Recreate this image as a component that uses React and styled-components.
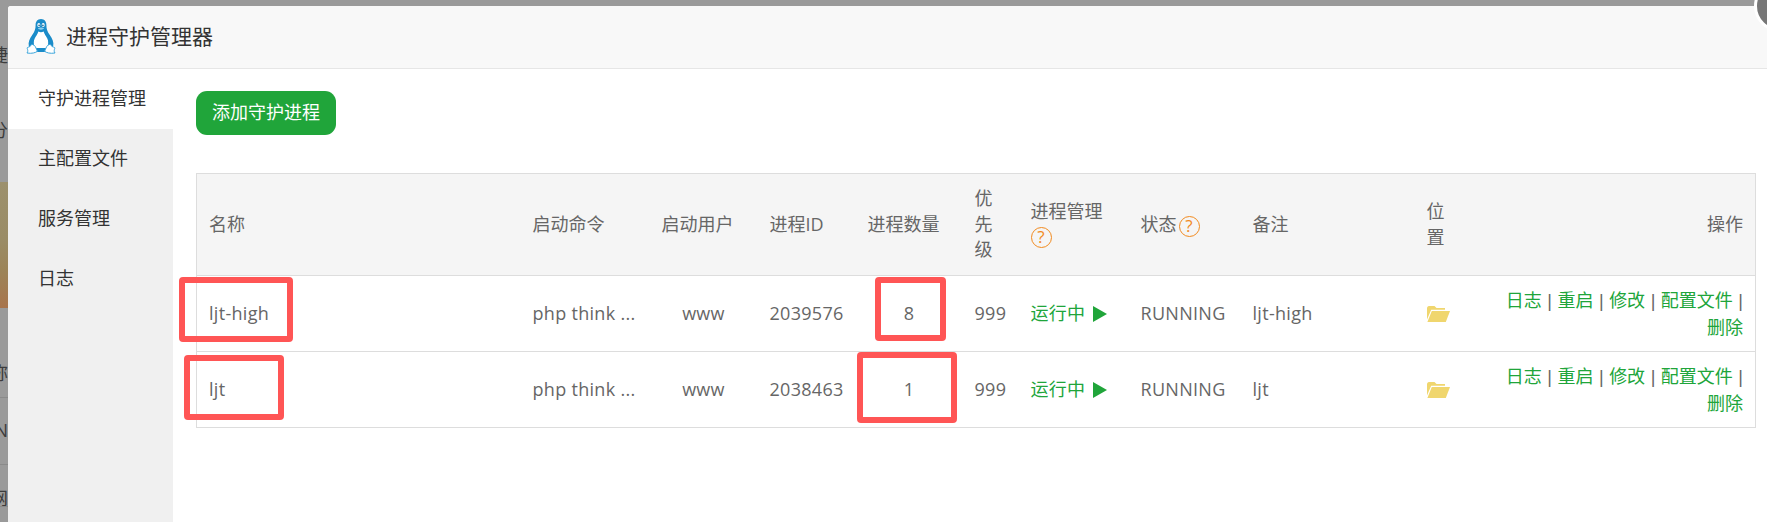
import React from 'react';
import styled, { createGlobalStyle } from 'styled-components';

const GlobalStyle = createGlobalStyle`
  html, body {
    margin: 0;
    height: 100%;
    overflow: hidden;
    background: #9a9a9a;
  }
  #root {
    height: 100%;
  }
`;

const FONT = `"Open Sans", "Noto Sans CJK SC", sans-serif`;

const Page = styled.div`
  position: relative;
  display: flex;
  width: 1767px;
  height: 522px;
  overflow: hidden;
  background: #9a9a9a;
  font-family: ${FONT};
  font-size: 18px;
  line-height: 1.42857;
  color: #666;
`;

// what is left of the page behind the dialog
const Backdrop = styled.div`
  flex: 0 0 8px;
  display: flex;
  flex-direction: column;
  overflow: hidden;
`;
const BackdropSlice = styled.div`
  flex: 0 0 ${(p) => p.$h}px;
  box-sizing: border-box;
  min-height: 0;
  display: flex;
  justify-content: flex-end;
  align-items: center;
  overflow: hidden;
  line-height: 20px;
  white-space: nowrap;
  color: #3c3c3c;
  border-bottom: ${(p) => (p.$line ? '1px solid #8a8a8a' : '0')};
`;
const BackdropImage = styled.div`
  flex: 0 0 126px;
  background: linear-gradient(180deg, #9c906c 0%, #9a8c66 45%, #9c8458 70%, #a8744c 100%);
`;

const Dialog = styled.div`
  flex: 1;
  margin-top: 6px;
  display: flex;
  flex-direction: column;
  background: #fff;
  border-top-left-radius: 3px;
  overflow: hidden;
`;
const DialogHeader = styled.header`
  flex: 0 0 63px;
  box-sizing: border-box;
  display: flex;
  align-items: center;
  gap: 10px;
  padding-left: 18px;
  background: #f8f8f8;
  border-bottom: 1px solid #e6e6e6;
  font-size: 21px;
  color: #333;
`;
const DialogBody = styled.div`
  flex: 1;
  display: flex;
  min-height: 0;
`;
const CloseButton = styled.div`
  position: absolute;
  top: -20px;
  right: -39px;
  box-sizing: border-box;
  width: 52px;
  height: 52px;
  border-radius: 50%;
  background: #777;
  border: 3px solid #fff;
`;

const Sidebar = styled.nav`
  flex: 0 0 165px;
  background: #f0f0f0;
`;
const SideItem = styled.div`
  height: 60px;
  display: flex;
  align-items: center;
  padding-left: 30px;
  color: #333;
  background: ${(p) => (p.$active ? '#fff' : 'transparent')};
`;

const Content = styled.main`
  flex: 1;
  min-width: 0;
  padding: 22px 12px 0 23px;
`;
const AddButton = styled.button`
  display: block;
  width: 140px;
  height: 44px;
  padding: 0;
  border: 0;
  border-radius: 11px;
  background: #20a53a;
  color: #fff;
  font: inherit;
`;

const Table = styled.table`
  width: 1559px;
  margin-top: 38px;
  table-layout: fixed;
  border-collapse: collapse;
  border: 1px solid #ddd;
`;
const Th = styled.th`
  padding: 12px;
  box-sizing: border-box;
  font-weight: 400;
  text-align: ${(p) => p.$align || 'left'};
  vertical-align: middle;
  background: #f5f5f5;
  border-bottom: 1px solid #ddd;
`;
const Td = styled.td`
  height: 76px;
  padding: 0 12px;
  box-sizing: border-box;
  text-align: ${(p) => p.$align || 'left'};
  vertical-align: middle;
  letter-spacing: 0.3px;
  border-top: 1px solid #ddd;
  white-space: ${(p) => (p.$nowrap ? 'nowrap' : 'normal')};
`;

const HelpMark = styled.span`
  display: inline-block;
  box-sizing: border-box;
  width: 21px;
  height: 21px;
  margin-left: ${(p) => p.$gap || 0}px;
  border: 1.5px solid #f28a1e;
  border-radius: 50%;
  color: #f28a1e;
  font-size: 17px;
  line-height: 18px;
  text-align: center;
  vertical-align: ${(p) => p.$lift || 0}px;
`;
const Running = styled.span`
  display: inline-flex;
  align-items: center;
  gap: 8px;
  color: #20a53a;
`;
const OpsList = styled.div`
  line-height: 26.5px;
  letter-spacing: 0;
`;
const Ops = styled.a`
  color: #20a53a;
  white-space: nowrap;
`;
const Sep = styled.span`
  margin: 0 ${(p) => (p.$end ? '0 0 5.5px' : '5.5px')};
  font-family: "Liberation Sans", sans-serif;
`;
const Folder = styled.svg`
  display: block;
  width: 23px;
  height: 17px;
  fill: #f0d66e;
`;

const Annotation = styled.div`
  position: absolute;
  left: ${(p) => p.$x}px;
  top: ${(p) => p.$y}px;
  width: ${(p) => p.$w}px;
  height: ${(p) => p.$h}px;
  box-sizing: border-box;
  border: 6px solid #ff5555;
  border-radius: 4px;
`;

const TuxIcon = () => (
  <svg width="30" height="36" viewBox="0 0 30 36">
    <path
      fill="#1b8cc9"
      d="M15 0C11.4 0 9.6 2.8 9.6 6c0 4-.8 6.2-3.4 10C3.6 19.8 2 23 2.8 27l4 6h16.4l4-6c.8-4-.8-7.200-3.400-11-2.600-3.800-3.400-6-3.400-10 0-3.200-1.800-6-5.400-6z"
    />
    <path fill="#fff" d="M12.400 12.500c1.600 1.100 3.600 1.100 5.200 0 1 3 2.400 4.700 3.700 7 1.300 2.400 1.300 6.500-.6 9.500H9.300c-1.900-3-1.900-7.100-.6-9.500 1.300-2.300 2.700-4 3.700-7z" />
    <ellipse cx="12.800" cy="6" rx="1.500" ry="2.100" fill="#fff" />
    <ellipse cx="17.200" cy="6" rx="1.500" ry="2.100" fill="#fff" />
    <circle cx="13.100" cy="6.400" r=".8" fill="#0f5f8c" />
    <circle cx="16.900" cy="6.400" r=".8" fill="#0f5f8c" />
    <path fill="#8fd0ee" d="M11.800 9.300c1.800-1 4.600-1 6.400 0-.8 1.800-5.600 1.800-6.400 0z" />
    <path fill="#fff" stroke="#3ba5db" strokeWidth="1" d="M5.500 25.500c1.800-.6 3.800 1.500 4.500 3.500.5 1.400 1 2.400 1.400 3.300-2 1.500-5.400 2.500-10.400 1.700 1.400-1.800.6-3.500.2-4.700-.2-1.200 1.500-1.200 2.500-1.600.9-.4 1.200-1.800 1.800-2.200z" />
    <path fill="#fff" stroke="#3ba5db" strokeWidth="1" d="M24.500 25.500c-1.800-.6-3.800 1.500-4.500 3.500-.5 1.400-1 2.400-1.400 3.300 2 1.500 5.400 2.500 10.400 1.700-1.400-1.800-.6-3.500-.2-4.700.2-1.200-1.500-1.200-2.500-1.600-.9-.4-1.200-1.800-1.800-2.200z" />
  </svg>
);

const PlayIcon = () => (
  <svg width="14" height="16" viewBox="0 0 14 16">
    <path fill="#20a53a" d="M0 0l14 8-14 8z" />
  </svg>
);

const FolderOpen = () => (
  <Folder viewBox="0 0 23 17">
    <path d="M0 14.500V3.500C0 2.200.8 1 2 1h5.500L9.500 3H18v1.800H4.200L0 14.500z" />
    <path d="M4.800 6H23l-4.200 11H.4z" />
  </Folder>
);

const columns = [324, 129, 108, 98, 107, 56, 110, 112, 174, 54, 287];

const rows = [
  { name: 'ljt-high', pid: '2039576', count: 8 },
  { name: 'ljt', pid: '2038463', count: 1 },
];

const marks = [
  { x: 179, y: 277, w: 114, h: 65 },
  { x: 184, y: 355, w: 100, h: 65 },
  { x: 875, y: 277, w: 71, h: 64 },
  { x: 857, y: 352, w: 100, h: 71 },
];

const App = () => (
  <Page>
    <GlobalStyle />
    <Backdrop>
      <BackdropSlice $h={45} />
      <BackdropSlice $h={20}>捷</BackdropSlice>
      <BackdropSlice $h={55} />
      <BackdropSlice $h={20}>分</BackdropSlice>
      <BackdropSlice $h={42} />
      <BackdropImage />
      <BackdropSlice $h={55} />
      <BackdropSlice $h={20}>称</BackdropSlice>
      <BackdropSlice $h={15} $line />
      <BackdropSlice $h={24} />
      <BackdropSlice $h={16}>N</BackdropSlice>
      <BackdropSlice $h={27} $line />
      <BackdropSlice $h={24} />
      <BackdropSlice $h={18} $line>网</BackdropSlice>
    </Backdrop>

    <Dialog>
      <DialogHeader>
        <TuxIcon />
        进程守护管理器
      </DialogHeader>
      <DialogBody>
        <Sidebar>
          <SideItem $active>守护进程管理</SideItem>
          <SideItem>主配置文件</SideItem>
          <SideItem>服务管理</SideItem>
          <SideItem>日志</SideItem>
        </Sidebar>
        <Content>
          <AddButton>添加守护进程</AddButton>
          <Table>
            <colgroup>
              {columns.map((w, i) => (
                <col key={i} width={w} />
              ))}
            </colgroup>
            <thead>
              <tr>
                <Th>名称</Th>
                <Th>启动命令</Th>
                <Th>启动用户</Th>
                <Th>进程ID</Th>
                <Th>进程数量</Th>
                <Th>优先级</Th>
                <Th>
                  进程管理
                  <HelpMark $lift={1}>?</HelpMark>
                </Th>
                <Th>
                  状态
                  <HelpMark $gap={2} $lift={-1}>?</HelpMark>
                </Th>
                <Th>备注</Th>
                <Th>位置</Th>
                <Th $align="right">操作</Th>
              </tr>
            </thead>
            <tbody>
              {rows.map((r) => (
                <tr key={r.pid}>
                  <Td>{r.name}</Td>
                  <Td $nowrap>php think ...</Td>
                  <Td $align="center">www</Td>
                  <Td>{r.pid}</Td>
                  <Td $align="center">{r.count}</Td>
                  <Td>999</Td>
                  <Td $nowrap>
                    <Running>
                      运行中
                      <PlayIcon />
                    </Running>
                  </Td>
                  <Td>RUNNING</Td>
                  <Td>{r.name}</Td>
                  <Td>
                    <FolderOpen />
                  </Td>
                  <Td $align="right">
                    <OpsList>
                      <Ops>日志</Ops>
                      <Sep>|</Sep>
                      <Ops>重启</Ops>
                      <Sep>|</Sep>
                      <Ops>修改</Ops>
                      <Sep>|</Sep>
                      <Ops>配置文件</Ops>
                      <Sep $end>|</Sep> <Ops>删除</Ops>
                    </OpsList>
                  </Td>
                </tr>
              ))}
            </tbody>
          </Table>
        </Content>
      </DialogBody>
    </Dialog>

    <CloseButton />
    {marks.map((m, i) => (
      <Annotation key={i} $x={m.x} $y={m.y} $w={m.w} $h={m.h} />
    ))}
  </Page>
);

export default App;
